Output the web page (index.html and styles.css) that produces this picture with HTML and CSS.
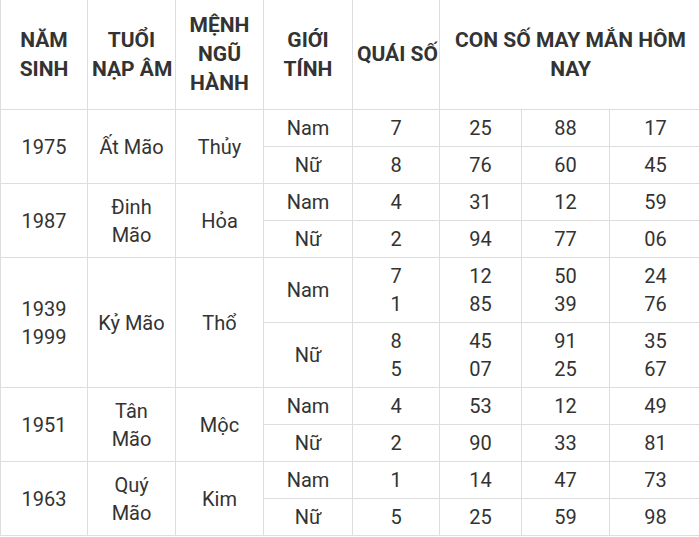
FILE: index.html
```html
<!DOCTYPE html>
<html lang="vi">
<head>
<meta charset="utf-8">
<title>Con số may mắn</title>
<link rel="stylesheet" href="styles.css">
</head>
<body>
<table class="lucky">
  <colgroup>
    <col class="c1"><col class="c2"><col class="c3"><col class="c4"><col class="c5"><col class="c6"><col class="c7"><col class="c8">
  </colgroup>
  <thead>
    <tr>
      <th>NĂM<br>SINH</th>
      <th>TUỔI<br>NẠP ÂM</th>
      <th>MỆNH<br>NGŨ<br>HÀNH</th>
      <th>GIỚI<br>TÍNH</th>
      <th>QUÁI SỐ</th>
      <th colspan="3">CON SỐ MAY MẮN HÔM<br>NAY</th>
    </tr>
  </thead>
  <tbody>
    <tr><td rowspan="2">1975</td><td rowspan="2">Ất Mão</td><td rowspan="2">Thủy</td><td>Nam</td><td>7</td><td>25</td><td>88</td><td>17</td></tr>
    <tr><td>Nữ</td><td>8</td><td>76</td><td>60</td><td>45</td></tr>
    <tr><td rowspan="2">1987</td><td rowspan="2">Đinh<br>Mão</td><td rowspan="2">Hỏa</td><td>Nam</td><td>4</td><td>31</td><td>12</td><td>59</td></tr>
    <tr><td>Nữ</td><td>2</td><td>94</td><td>77</td><td>06</td></tr>
    <tr><td rowspan="2">1939<br>1999</td><td rowspan="2">Kỷ Mão</td><td rowspan="2">Thổ</td><td>Nam</td><td>7<br>1</td><td>12<br>85</td><td>50<br>39</td><td>24<br>76</td></tr>
    <tr><td>Nữ</td><td>8<br>5</td><td>45<br>07</td><td>91<br>25</td><td>35<br>67</td></tr>
    <tr><td rowspan="2">1951</td><td rowspan="2">Tân<br>Mão</td><td rowspan="2">Mộc</td><td>Nam</td><td>4</td><td>53</td><td>12</td><td>49</td></tr>
    <tr><td>Nữ</td><td>2</td><td>90</td><td>33</td><td>81</td></tr>
    <tr><td rowspan="2">1963</td><td rowspan="2">Quý<br>Mão</td><td rowspan="2">Kim</td><td>Nam</td><td>1</td><td>14</td><td>47</td><td>73</td></tr>
    <tr><td>Nữ</td><td>5</td><td>25</td><td>59</td><td>98</td></tr>
  </tbody>
</table>
</body>
</html>
```

FILE: styles.css
```css
html, body {
  margin: 0;
  padding: 0;
  overflow: hidden;
  background: #fff;
}
body {
  font-family: Roboto, "Liberation Sans", Arial, sans-serif;
  color: #333;
}
.lucky {
  border-collapse: collapse;
  table-layout: fixed;
  width: 701px;
  font-size: 20px;
  line-height: 28px;
}
.c1 { width: 87px; }
.c2 { width: 88px; }
.c3 { width: 88px; }
.c4 { width: 89px; }
.c5 { width: 87px; }
.c6 { width: 82px; }
.c7 { width: 88px; }
.c8 { width: 92px; }
.lucky th,
.lucky td {
  border: 1px solid #ddd;
  padding: 4px;
  text-align: center;
  vertical-align: middle;
  font-weight: 400;
}
.lucky thead th {
  border-top: 0;
  padding: 11px 4px;
  font-size: 21px;
  line-height: 29px;
  font-weight: 700;
  white-space: nowrap;
}
```
